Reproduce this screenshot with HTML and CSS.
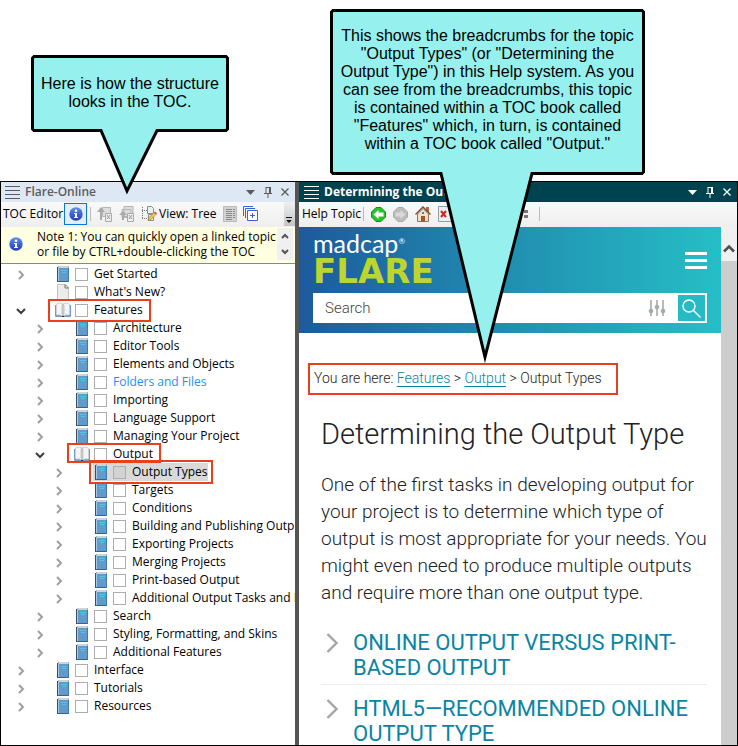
FILE: index.html
```html
<!DOCTYPE html>
<html lang="en">
<head>
<meta charset="utf-8">
<title>Determining the Output Type</title>
<link rel="stylesheet" href="styles.css">
</head>
<body>
<svg width="0" height="0" class="sprites" aria-hidden="true">
  <defs>
    <linearGradient id="info-fill" x1="0" y1="0" x2="0" y2="1"><stop offset="0" stop-color="#5f8df0"/><stop offset="1" stop-color="#1d3fb8"/></linearGradient>
  </defs>
  <symbol id="book" viewBox="0 0 14 16"><path d="M1 1.500h12V16H1z" fill="#629acb"/><path d="M2 0h11v2H2z" fill="#a9b4bb"/><path d="M3 1h9" stroke="#f3f3f3"/><path d="M1.500 1v15" stroke="#454b52"/><path d="M2.500 2v13" stroke="#a8c9e6"/><path d="M2 15.500h11" stroke="#2f6595"/><path d="M12.500 2v14" stroke="#3f79b0"/><path d="M5 4.500h6M6 6.500h4" stroke="#4fc9e0"/></symbol>
  <symbol id="open-book" viewBox="0 0 16 16"><path d="M1 3v11h14V3" fill="none" stroke="#3e7fc0" stroke-width="1.500"/><path d="M1.500 2Q5 0 8 2Q11 0 14.500 2V13Q11 12 8 14Q5 12 1.500 13z" fill="#f5f5f5" stroke="#d0d0d0"/><path d="M8 2v13" stroke="#999"/><path d="M7 14.500h2" stroke="#333"/><path d="M6.500 3v9M9.500 3v9" stroke="#ddd"/></symbol>
  <symbol id="page" viewBox="0 0 14 16"><path d="M1.500 .5H9L12.500 4V15.500H1.500z" fill="#ececec" stroke="#c2c2c2"/><path d="M9 .5V4h3.500z" fill="#fff" stroke="#777"/></symbol>
  <symbol id="chev" viewBox="0 0 8 10"><path d="M2 1l4 4-4 4" fill="none" stroke="#a0a0a0" stroke-width="2"/></symbol>
  <symbol id="chev-open" viewBox="0 0 10 8"><path d="M1 2l4 4 4-4" fill="none" stroke="#3c3c3c" stroke-width="2"/></symbol>
  <symbol id="info" viewBox="0 0 14 14"><circle cx="7" cy="7" r="6.700" fill="url(#info-fill)"/><circle cx="7" cy="3.700" r="1.300" fill="#fff"/><path d="M5 6h3v4h1v1H5v-1h1V7H5z" fill="#fff"/></symbol>
  <symbol id="grip" viewBox="0 0 15 14"><path d="M0 1.500h15M0 5.500h15M0 9.500h15M0 13.500h15" stroke="currentColor"/></symbol>
  <symbol id="pin" viewBox="0 0 8 11"><path d="M2 .5h4.500M2 0v6M5.500 0v6M6.500 0v6M0 6.500h8M4 7v4" fill="none" stroke="currentColor"/></symbol>
  <symbol id="close" viewBox="0 0 8 8"><path d="M.5 .5l7 7M7.500 .5l-7 7" stroke="currentColor" stroke-width="1.300"/></symbol>
  <symbol id="down" viewBox="0 0 9 5"><path d="M0 0h9L4.500 5z" fill="currentColor"/></symbol>
</svg>

<div class="stage">
  <main class="workspace">
    <section class="pane toc" aria-label="Flare-Online">
      <header class="titlebar">
        <svg class="grip"><use href="#grip"/></svg>
        <h2>Flare-Online</h2>
        <button aria-label="Window menu"><svg width="9" height="5"><use href="#down"/></svg></button>
        <button aria-label="Pin"><svg width="8" height="11"><use href="#pin"/></svg></button>
        <button aria-label="Close"><svg width="8" height="8"><use href="#close"/></svg></button>
      </header>
      <div class="toolbar">
        <span>TOC Editor</span>
        <button class="active" aria-label="Show notes"><svg width="14" height="14"><use href="#info"/></svg></button>
        <i class="sep"></i>
        <button class="tool" aria-label="New item"><svg width="16" height="16" viewBox="0 0 16 16"><path d="M5.500 1.500h8v9h-8z" fill="#ddd" stroke="#b5b5b5"/><path d="M0 6l4-5 4 5H5v8H3V6z" fill="#aaa"/><path d="M8.500 7.500h6v8h-6z" fill="#eee" stroke="#aaa"/><path d="M10 9l3 4m0-4l-3 4" stroke="#999"/></svg></button>
        <button class="tool" aria-label="New book"><svg width="16" height="16" viewBox="0 0 16 16"><path d="M5 .5h9v10H5zM3 3.500h9v8H3z" fill="#ddd" stroke="#b5b5b5"/><path d="M0 9l4-4 4 4H5v5H3V9z" fill="#aaa"/><path d="M8.500 7.500h6v8h-6z" fill="#eee" stroke="#aaa"/><path d="M10 9l3 4m0-4l-3 4" stroke="#999"/></svg></button>
        <button class="tool view"><svg width="16" height="16" viewBox="0 0 16 16"><path d="M1.500 1v12M1 4.500h5M1 12.500h6" stroke="#777" stroke-dasharray="1 1"/><path d="M6.500 .5h4l2 2v5h-6zM7.500 8.500h5v6h-5z" fill="#e7f2ee" stroke="#7d9691"/><path d="M7 14.500l1-3 5-5 2 2-5 5z" fill="#f2c45c" stroke="#96742c" stroke-width=".6"/><path d="M13 6.500l1-1 2 2-1 1z" fill="#d44"/></svg>View: Tree</button>
        <button class="tool" aria-label="List"><svg width="14" height="16" viewBox="0 0 14 16"><path d="M.5 .5h13v15H.5z" fill="#d2d2d2" stroke="#bbb"/><path d="M3 3.500h6M3 5.500h6M3 7.500h6M3 9.500h6M3 11.500h6M3 13.500h6M10 3.500h2M10 5.500h2M10 7.500h2M10 9.500h2M10 11.500h2" stroke="#8a8a8a"/></svg></button>
        <button class="tool" aria-label="Expand all"><svg width="15" height="16" viewBox="0 0 15 16"><path d="M.5 10V.5H10M2.500 12V2.500H12" fill="none" stroke="#3266d4"/><path d="M4.500 4.500h10v10h-10z" fill="#fff" stroke="#3266d4"/><path d="M7 9.500h5M9.500 7v5" stroke="#3266d4"/></svg></button>
        <button class="overflow" aria-label="More tools"><svg width="7" height="7" viewBox="0 0 7 7"><path d="M0 .5h6M1 3.500h4l-2 2z" fill="#111" stroke="#111"/></svg></button>
      </div>
      <div class="note">
        <svg width="14" height="14"><use href="#info"/></svg>
        <p>Note 1: You can quickly open a linked topic<br>or file by CTRL+double-clicking the TOC</p>
        <div class="spin">
          <button aria-label="Previous note"><svg width="8" height="6" viewBox="0 0 8 6"><path d="M1 5l3-3 3 3" fill="none" stroke="#555" stroke-width="2"/></svg></button>
          <button aria-label="Next note"><svg width="8" height="6" viewBox="0 0 8 6"><path d="M1 1l3 3 3-3" fill="none" stroke="#555" stroke-width="2"/></svg></button>
        </div>
      </div>
      <ul class="tree" id="tree"></ul>
    </section>

    <section class="pane topic" aria-label="Determining the Output Type">
      <header class="titlebar dark">
        <svg class="grip"><use href="#grip"/></svg>
        <h2>Determining the Output Type</h2>
        <button aria-label="Window menu"><svg width="9" height="5"><use href="#down"/></svg></button>
        <button aria-label="Pin"><svg width="8" height="11"><use href="#pin"/></svg></button>
        <button aria-label="Close"><svg width="8" height="8"><use href="#close"/></svg></button>
      </header>
      <div class="toolbar">
        <span>Help Topic</span>
        <i class="sep"></i>
        <button class="tool" aria-label="Back"><svg width="15" height="15" viewBox="0 0 15 15"><path d="M5 .5h5L14.500 5v5L10 14.500H5L.5 10V5z" fill="#26c42c" stroke="#138a1b"/><path d="M2.500 7.500l5-4.500v2.500h5v4h-5V12z" fill="#fff"/></svg></button>
        <button class="tool" aria-label="Forward"><svg width="15" height="15" viewBox="0 0 15 15"><path d="M5 .5h5L14.500 5v5L10 14.500H5L.5 10V5z" fill="#bcbcbc" stroke="#a9a9a9"/><path d="M12.500 7.500l-5-4.500v2.500h-5v4h5V12z" fill="#d9d9d9"/></svg></button>
        <button class="tool" aria-label="Home"><svg width="16" height="16" viewBox="0 0 16 16"><path d="M11 1h3v5h-3z" fill="#b06a48"/><path d="M2.500 8v7.500h11V8L8 2.500z" fill="#efe0c6" stroke="#8a7767"/><path d="M.5 8.500L8 1l7.500 7.500" fill="none" stroke="#7d4d35" stroke-width="1.400"/><path d="M6 10h4v5.500H6z" fill="#a5532f"/><path d="M7 6h2v2H7z" fill="#777"/></svg></button>
        <button class="tool" aria-label="Stop"><svg width="15" height="16" viewBox="0 0 15 16"><path d="M.5 .5h13v15H.5z" fill="#e9f0f2" stroke="#8ea0a6"/><path d="M3 5l5 6m0-6l-5 6" stroke="#d22" stroke-width="2"/></svg></button>
        <button class="tool far" aria-label="Structure"><svg width="12" height="10" viewBox="0 0 12 10"><path d="M0 2h5M0 7h5" stroke="#888"/><path d="M8 1h4v3H8zM8 6h4v3H8z" fill="#777"/></svg></button>
        <i class="sep"></i>
      </div>
      <div class="browser">
        <article>
          <header class="site">
            <div class="brand">
              <div class="logo"><span>madcap<sup>®</sup></span><strong>FLARE</strong></div>
              <button class="burger" aria-label="Menu"><i></i><i></i><i></i></button>
            </div>
            <form class="search">
              <input type="text" placeholder="Search" aria-label="Search">
              <svg width="18" height="18" viewBox="0 0 18 18"><path d="M3 1v16M9 1v16M15 1v16" stroke="#a3abae" stroke-width="1.600"/><circle cx="3" cy="12" r="2.300" fill="#a3abae"/><circle cx="9" cy="8" r="2.300" fill="#a3abae"/><circle cx="15" cy="12" r="2.300" fill="#a3abae"/></svg>
              <button type="button" aria-label="Run search"><svg width="19" height="19" viewBox="0 0 19 19"><circle cx="7" cy="7" r="6" fill="none" stroke="#fff" stroke-width="1.400"/><path d="M11.500 11.500l7 7" stroke="#fff" stroke-width="1.400"/></svg></button>
            </form>
          </header>
          <nav class="crumbs">You are here: <a href="#">Features</a> &gt; <a href="#">Output</a> &gt; Output Types</nav>
          <div class="copy">
            <h1>Determining the Output Type</h1>
            <p>One of the first tasks in developing output for your project is to determine which type of output is most appropriate for your needs. You might even need to produce multiple outputs and require more than one output type.</p>
            <a class="drop" href="#"><svg width="13" height="20" viewBox="0 0 13 20"><path d="M1.500 1l9 9-9 9" fill="none" stroke="#9fa5a8" stroke-width="2.400"/></svg><span>ONLINE OUTPUT VERSUS PRINT-BASED OUTPUT</span></a>
            <a class="drop" href="#"><svg width="13" height="20" viewBox="0 0 13 20"><path d="M1.500 1l9 9-9 9" fill="none" stroke="#9fa5a8" stroke-width="2.400"/></svg><span>HTML5—RECOMMENDED ONLINE OUTPUT TYPE</span></a>
          </div>
        </article>
        <div class="scroll"><svg width="12" height="9" viewBox="0 0 12 9"><path d="M1 7.500l5-5 5 5" fill="none" stroke="#505050" stroke-width="2.600"/></svg><i></i></div>
      </div>
    </section>
  </main>

  <aside class="callout toc-callout">
    <svg width="198" height="144" viewBox="0 0 198 144"><path d="M3 1.500H195L196.500 3V74L195 75.500H126L96 136L70 75.500H3L1.500 74V3z" fill="#96f0ed" stroke="#000" stroke-width="3"/></svg>
    <p>Here is how the structure<br>looks in the TOC.</p>
  </aside>
  <aside class="callout crumb-callout">
    <svg width="315" height="362" viewBox="0 0 315 362"><path d="M3 1.500H312L313.500 3V163L312 164.500H202L155 348L111 164.500H3L1.500 163V3z" fill="#96f0ed" stroke="#000" stroke-width="3" stroke-miterlimit="10"/></svg>
    <p>This shows the breadcrumbs for the topic<br>"Output Types" (or "Determining the<br>Output Type") in this Help system. As you<br>can see from the breadcrumbs, this topic<br>is contained within a TOC book called<br>"Features" which, in turn, is contained<br>within a TOC book called "Output."</p>
  </aside>
</div>
<script src="tree.js"></script>
</body>
</html>
```
FILE: styles.css
```css
* { box-sizing: border-box; }
body { margin: 0; background: #fff; color: #000; font: 12px/18px "Open Sans", "Noto Sans", sans-serif; }
button { display: flex; flex: none; align-items: center; justify-content: center; margin: 0; padding: 0; border: 0; background: none; color: inherit; font: inherit; }
svg { display: block; flex: none; }
h1, h2, p, ul { margin: 0; padding: 0; font-weight: inherit; }
.sprites { position: absolute; }

.stage { position: relative; display: flex; flex-direction: column; height: 100vh; padding-top: 181px; }
.workspace { flex: 1; min-height: 0; display: grid; grid-template-columns: minmax(0, 298fr) minmax(0, 438fr); border: 1px solid #000; }
.pane { display: flex; flex-direction: column; min-width: 0; min-height: 0; overflow: hidden; }
.toc { border-right: 4px solid #555; }

.titlebar { flex: none; display: flex; align-items: center; gap: 9px; height: 20px; padding: 0 6px 0 4px; background: #dee8f5; color: #5c5c5c; }
.titlebar h2 { flex: 1; min-width: 0; overflow: hidden; margin-left: -4px; font-size: 12px; font-weight: 600; white-space: nowrap; }
.titlebar.dark { padding-left: 5px; background: #004350; color: #fff; }
.dark h2 { font-weight: 700; }
.grip { width: 15px; height: 14px; }

.toolbar { flex: none; display: flex; align-items: center; gap: 6px; height: 25px; padding: 0 0 1px 2px; background: linear-gradient(#fafafa, #eee); white-space: nowrap; }
.topic .toolbar { padding-left: 3px; gap: 7px; }
.toolbar span { margin-right: -5px; }
.active { width: 23px; height: 22px; border: 1px solid #0a78d0; background: #e3eef9; }
.sep { width: 1px; height: 14px; background: #bbb; }
.toc .sep { margin-left: -3px; }
.view { gap: 2px; }
.far { margin: 0 4px 0 56px; }
.overflow { align-self: stretch; align-items: flex-end; width: 11px; margin-left: auto; padding-bottom: 2px; background: linear-gradient(#f0f0f0, #c4c4c4); }

.note { flex: none; display: flex; align-items: center; height: 37px; padding: 0 2px 2px 8px; background: #ffffe1; border-bottom: 1px solid #888; line-height: 15px; }
.note p { flex: 1; min-width: 0; margin-left: 14px; white-space: nowrap; }
.spin { display: grid; flex: none; width: 16px; height: 32px; background: #f0f0f0; }
.spin button { width: 16px; }

.tree { list-style: none; padding-top: 1px; }
.tree li { display: flex; align-items: center; height: 18px; white-space: nowrap; }
.tree .level-0 { padding-left: 15px; }
.tree .level-1 { padding-left: 34px; }
.tree .level-2 { padding-left: 53px; }
.twist { width: 10px; height: 18px; padding-top: 1px; margin-right: 29px; }
.entry { position: relative; flex: none; display: flex; align-items: center; height: 18px; }
.entry svg { width: 16px; height: 16px; }
.entry input { appearance: none; width: 13px; height: 13px; margin: 1px 6px 0 4px; border: 1px solid #adadad; background: #fff; }
.entry.link { color: #1e90ff; }
.entry.selected { background: linear-gradient(#d9d9d9, #d9d9d9); }
.entry.selected input { background: #d2d2d2; }
.marked::after { content: ""; position: absolute; z-index: 1; inset: -2px -8px -3px -7px; border: 2px solid #e8401c; }
.level-1 .marked::after { bottom: 0; }
.level-2 .marked::after { inset: -3px -5px -3px -4px; }

.browser { flex: 1; min-height: 0; display: flex; font-family: Roboto, sans-serif; }
article { flex: 1; min-width: 0; overflow: hidden; color: #222; font-weight: 300; }
.site { height: 106px; padding: 6px 14px 9px; background: linear-gradient(90deg, #1d5a9c, #2191b2 52%, #26bec6); }
.brand { display: flex; justify-content: space-between; height: 60px; }
.logo { display: flex; flex-direction: column; color: #fff; font: 400 25px/20px Lato, sans-serif; }
.logo span { margin-bottom: 4px; }
.logo sup { font-size: 8px; line-height: 0; vertical-align: 9px; }
.logo strong { color: #bdd531; font: 700 34px/28px "DejaVu Sans", sans-serif; }
.burger { flex-direction: column; gap: 4px; align-self: flex-start; margin-top: 19px; }
.burger i { width: 22px; height: 3px; background: #fff; }
.search { display: flex; align-items: center; height: 30px; padding: 2px; background: #fff; }
.search input { flex: 1; min-width: 0; border: 0; outline: 0; padding: 0 10px; font: 300 15px/20px Roboto, sans-serif; }
.search input::placeholder { color: #444; }
.search button { width: 27px; height: 26px; margin-left: 12px; background: #26bbc4; }
.crumbs { width: fit-content; margin: 30px 0 0 9px; padding: 4px 14px 6px 4px; border: 2px solid #e8401c; font-size: 14px; line-height: 18px; white-space: nowrap; }
.crumbs a { color: #0a84a5; text-underline-offset: 3px; }
.copy { padding: 19px 14px 0 22px; }
.copy h1 { font-size: 29px; line-height: 40px; }
.copy p { margin: 17px -8px 0 0; font-size: 19px; line-height: 27px; }
.drop { display: flex; gap: 14px; padding: 11px 0 4px 5px; border-bottom: 1px solid #eee; color: #0a84a5; font-size: 22px; font-weight: 400; line-height: 25px; text-decoration: none; }
.copy p + .drop { margin-top: 13px; }
.drop svg { margin-top: 3px; }
.scroll { width: 16px; display: flex; flex-direction: column; align-items: center; background: #f0f0f0; }
.scroll svg { margin: 17px 0 8px; }
.scroll i { flex: 1; align-self: stretch; background: #cdcdcd; }

.callout { position: absolute; z-index: 2; font: 16px/18px "Liberation Sans", sans-serif; text-align: center; white-space: nowrap; pointer-events: none; }
.callout svg { position: absolute; inset: 0; }
.callout p { position: relative; }
.toc-callout { left: 31px; top: 55px; width: 198px; padding-top: 20px; }
.crumb-callout { left: 330px; top: 9px; width: 315px; padding-top: 18px; }
```
FILE: tree.js
```js
// Each entry: [level, icon, label, extra classes]
const rows = [
  [0, 'book', 'Get Started'], [0, 'page', "What's New?"], [0, 'open-book', 'Features', 'marked'],
  [1, 'book', 'Architecture'], [1, 'book', 'Editor Tools'], [1, 'book', 'Elements and Objects'],
  [1, 'book', 'Folders and Files', 'link'], [1, 'book', 'Importing'], [1, 'book', 'Language Support'],
  [1, 'book', 'Managing Your Project'], [1, 'open-book', 'Output', 'marked'],
  [2, 'book', 'Output Types', 'marked selected'], [2, 'book', 'Targets'], [2, 'book', 'Conditions'],
  [2, 'book', 'Building and Publishing Output'], [2, 'book', 'Exporting Projects'],
  [2, 'book', 'Merging Projects'], [2, 'book', 'Print-based Output'],
  [2, 'book', 'Additional Output Tasks and Features'], [1, 'book', 'Search'],
  [1, 'book', 'Styling, Formatting, and Skins'], [1, 'book', 'Additional Features'],
  [0, 'book', 'Interface'], [0, 'book', 'Tutorials'], [0, 'book', 'Resources'],
];
document.getElementById('tree').innerHTML = rows.map(([level, icon, label, extra = '']) => {
  const chevron = icon === 'open-book'
    ? '<svg width="10" height="8"><use href="#chev-open"/></svg>'
    : icon === 'book' ? '<svg width="8" height="10"><use href="#chev"/></svg>' : '';
  return `<li class="level-${level}"><button class="twist" aria-label="Toggle ${label}">${chevron}</button>
    <label class="entry ${extra}"><svg><use href="#${icon}"/></svg><input type="checkbox">${label}</label></li>`;
}).join('');
```
